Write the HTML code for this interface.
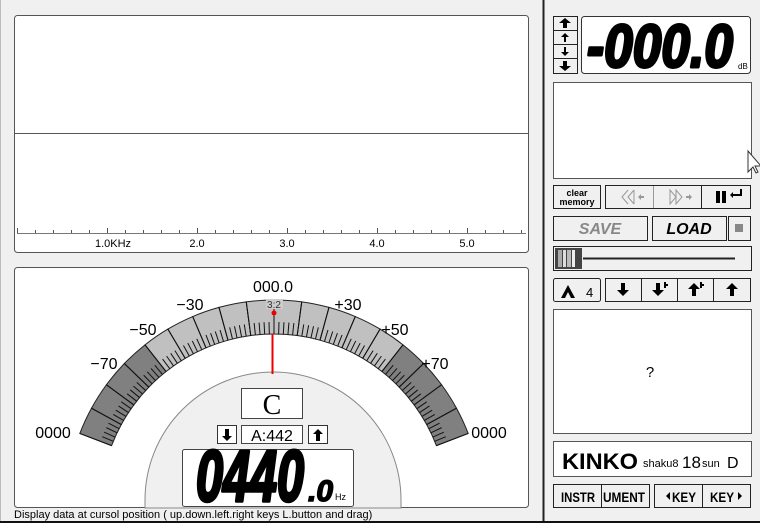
<!DOCTYPE html>
<html><head><meta charset="utf-8"><style>
html,body{margin:0;padding:0;background:#f0f0f0;}
svg{display:block;font-family:"Liberation Sans",sans-serif;}
</style></head><body>
<svg id="s" width="760" height="528" viewBox="0 0 760 528" xmlns="http://www.w3.org/2000/svg">
<rect width="760" height="528" fill="#f0f0f0"/>
<line x1="0.5" y1="0" x2="0.5" y2="522" stroke="#bbb"/>
<rect x="14.5" y="15.5" width="514" height="237" rx="3" fill="#fff" stroke="#555"/>
<line x1="15" y1="133.5" x2="528" y2="133.5" stroke="#555"/>
<line x1="17" y1="233.5" x2="526" y2="233.5" stroke="#777"/>
<g id="ticks" stroke="#555"></g>
<g font-size="11" fill="#000" text-anchor="middle">
<text x="113" y="247">1.0KHz</text><text x="197" y="247">2.0</text><text x="287" y="247">3.0</text><text x="377" y="247">4.0</text><text x="467" y="247">5.0</text>
</g>
<rect x="14.5" y="267.5" width="514" height="240" rx="3" fill="#fff" stroke="#555"/>
<path d="M145,508 L145,500 A128,128 0 0 1 401,500 L401,508 Z" fill="#f0f0f0" stroke="#888"/>
<g id="arc"></g>
<g font-size="16" fill="#000" text-anchor="middle">
<text x="273" y="292">000.0</text>
<text x="190" y="310">−30</text><text x="348" y="310">+30</text>
<text x="143" y="335">−50</text><text x="395" y="335">+50</text>
<text x="104" y="369">−70</text><text x="435" y="369">+70</text>
<text x="53" y="438">0000</text><text x="489" y="438">0000</text>
</g>
<rect x="266" y="299" width="17" height="10" fill="#ccc"/>
<text x="274" y="308" font-size="10" text-anchor="middle" fill="#333">3:2</text>
<circle cx="274" cy="313" r="2.5" fill="#e00"/>
<line x1="272.5" y1="334" x2="272.5" y2="374" stroke="#e00" stroke-width="2"/>
<rect x="241.5" y="388.5" width="61" height="30" fill="#fff" stroke="#444"/>
<text x="272" y="414" font-size="28" font-family="Liberation Serif,serif" text-anchor="middle">C</text>
<rect x="217.5" y="425.5" width="19" height="18" fill="#fff" stroke="#333"/>
<path d="M225,429h4v7h3l-5,5l-5,-5h3z" fill="#000"/>
<rect x="241.5" y="425.5" width="61" height="18" fill="#fff" stroke="#444"/>
<text x="272" y="441" font-size="16" text-anchor="middle">A:442</text>
<rect x="308.5" y="425.5" width="19" height="18" fill="#fff" stroke="#333"/>
<path d="M316,441h4v-7h3l-5,-5l-5,5h3z" fill="#000"/>
<rect x="182.5" y="449.5" width="171" height="57" rx="2" fill="#fff" stroke="#444"/>
<text x="196" y="501" font-size="72" font-weight="bold" font-style="italic" stroke="#000" stroke-width="3.5" stroke-linejoin="round" textLength="108" lengthAdjust="spacingAndGlyphs">0440</text>
<text x="308" y="501" font-size="30" font-weight="bold" font-style="italic" stroke="#000" stroke-width="1.5">.0</text>
<text x="335" y="500" font-size="9">Hz</text>
<text x="14" y="518" font-size="11">Display data at cursol position ( up.down.left.right keys L.button and drag)</text>
<line x1="543.5" y1="0" x2="543.5" y2="522" stroke="#222" stroke-width="2"/>
<rect x="0" y="521" width="760" height="2" fill="#111"/>
<rect x="0" y="523" width="760" height="5" fill="#fff"/>
<g stroke="#222" fill="#f0f0f0">
<rect x="553.5" y="16.5" width="24" height="14"/><rect x="553.5" y="30.5" width="24" height="14"/><rect x="553.5" y="44.5" width="24" height="14"/><rect x="553.5" y="58.5" width="24" height="15"/>
</g>
<g fill="#000">
<path d="M563,28v-5h-4l6,-5l6,5h-4v5z"/><path d="M564,42v-5h-3l4,-4l4,4h-3v5z"/>
<path d="M564,47v5h-3l4,4l4,-4h-3v-5z"/><path d="M563,61v5h-4l6,5l6,-5h-4v-5z"/>
</g>
<rect x="581.5" y="16.5" width="169" height="57" rx="3" fill="#fff" stroke="#333"/>
<text x="587" y="67" font-size="60" font-weight="bold" font-style="italic" stroke="#000" stroke-width="3" stroke-linejoin="round" textLength="146" lengthAdjust="spacingAndGlyphs">-000.0</text>
<text x="738" y="69" font-size="8">dB</text>
<rect x="553.5" y="82.5" width="198" height="96" fill="#fff" stroke="#555"/>
<path d="M748,151v21l5,-5l3,6l2,-1l-3,-6h6z" fill="#fff" stroke="#333"/>
<g stroke="#222" fill="#f0f0f0">
<rect x="553.5" y="185.5" width="47" height="23"/>
<rect x="605.5" y="185.5" width="145" height="23"/>
<rect x="553.5" y="216.5" width="94" height="24"/>
<rect x="652.5" y="216.5" width="74" height="24"/>
<rect x="728.5" y="216.5" width="22" height="24"/>
<rect x="553.5" y="246.5" width="198" height="24"/>
<rect x="553.5" y="278.5" width="47" height="23" rx="2"/>
<rect x="605.5" y="278.5" width="145" height="23"/>
</g>
<g stroke="#999"><line x1="653.5" y1="186" x2="653.5" y2="208"/><line x1="701.5" y1="186" x2="701.5" y2="208" stroke="#222"/></g>
<text x="577" y="196" font-size="9" font-weight="bold" text-anchor="middle">clear</text>
<text x="577" y="205" font-size="9" font-weight="bold" text-anchor="middle">memory</text>
<g fill="none" stroke="#999"><path d="M628,190l-6,7l6,7M634,190l-6,7l6,7M634,190v14"/><path d="M670,190v14l6,-7zM676,190v14l6,-7z"/></g>
<path d="M644,196h-3v-2l-3,3l3,3v-2h3z M686,196h3v-2l3,3l-3,3v-2h-3z" fill="#999"/>
<rect x="716" y="191" width="4" height="12"/><rect x="722" y="191" width="4" height="12"/>
<path d="M740,189v5h-7v-2l-3,3l3,3v-2h9v-7z" fill="#000"/>
<text x="600" y="234" font-size="16" font-weight="bold" font-style="italic" fill="#888" text-anchor="middle">SAVE</text>
<text x="689" y="234" font-size="16" font-weight="bold" font-style="italic" text-anchor="middle">LOAD</text>
<rect x="735" y="224" width="8" height="8" fill="#888"/>
<line x1="583" y1="258.5" x2="735" y2="258.5" stroke="#222" stroke-width="2"/>
<rect x="555" y="248" width="27" height="21" fill="#444"/>
<rect x="558" y="250" width="4" height="17" fill="#aaa"/><rect x="563" y="250" width="3" height="17" fill="#ddd"/><rect x="567" y="250" width="4" height="17" fill="#bbb"/><rect x="572" y="250" width="3" height="17" fill="#eee"/>
<path d="M561,298l7,-13l7,13h-4l-3,-6l-3,6z" fill="#000"/>
<text x="586" y="297" font-size="13">4</text>
<g stroke="#222"><line x1="641.5" y1="279" x2="641.5" y2="301"/><line x1="677.5" y1="279" x2="677.5" y2="301"/><line x1="713.5" y1="279" x2="713.5" y2="301"/></g>
<g fill="#000">
<path d="M621,283h4v7h4l-6,6l-6,-6h4z"/>
<path d="M656,283h4v7h4l-6,6l-6,-6h4z M664,282h2v2h2v2h-2v2h-2z"/>
<path d="M692,296h4v-7h4l-6,-6l-6,6h4z M700,282h2v2h2v2h-2v2h-2z"/>
<path d="M730,296h4v-7h4l-6,-6l-6,6h4z"/>
</g>
<rect x="553.5" y="309.5" width="198" height="124" fill="#fff" stroke="#555"/>
<text x="650" y="377" font-size="15" text-anchor="middle">?</text>
<rect x="553.5" y="441.5" width="198" height="35" fill="#fff" stroke="#555"/>
<text x="562" y="469" font-size="22" font-weight="bold" textLength="76" lengthAdjust="spacingAndGlyphs">KINKO</text>
<text x="643" y="467" font-size="11">shaku8</text>
<text x="682" y="468" font-size="17">18</text><text x="702" y="467" font-size="11">sun</text>
<text x="727" y="468" font-size="16">D</text>
<g stroke="#222" fill="#f0f0f0"><rect x="553.5" y="484.5" width="96" height="23"/><rect x="654.5" y="484.5" width="96" height="23"/></g>
<g stroke="#222"><line x1="601.5" y1="485" x2="601.5" y2="507"/><line x1="702.5" y1="485" x2="702.5" y2="507"/></g>
<g font-size="14" font-weight="bold" text-anchor="middle">
<text x="578" y="502" textLength="34" lengthAdjust="spacingAndGlyphs">INSTR</text>
<text x="624" y="502" textLength="42" lengthAdjust="spacingAndGlyphs">UMENT</text>
<text x="684" y="502" textLength="24" lengthAdjust="spacingAndGlyphs">KEY</text>
<text x="722" y="502" textLength="24" lengthAdjust="spacingAndGlyphs">KEY</text>
</g>
<path d="M666,496l4,-4v8z M738,492l4,4l-4,4z" fill="#000"/>
</svg>
<script>
var NS="http://www.w3.org/2000/svg";
function el(p,t,a){var e=document.createElementNS(NS,t);for(var k in a)e.setAttribute(k,a[k]);p.appendChild(e);return e;}
var tk=document.getElementById('ticks');
for(var x=17;x<526;x+=18){var maj=((x-107)%90===0);el(tk,'line',{x1:x+.5,y1:maj?228:230,x2:x+.5,y2:233});}
var g=document.getElementById('arc');var cx=274,cy=508,R=208,r=174,A=69*Math.PI/180;
function pt(rad,a){return [cx+rad*Math.sin(a),cy-rad*Math.cos(a)];}
function seg(a0,a1,fill){var p=pt(R,a0),q=pt(R,a1),s=pt(r,a1),t=pt(r,a0);
el(g,'path',{d:'M'+p+' A'+R+','+R+' 0 0 1 '+q+' L'+s+' A'+r+','+r+' 0 0 0 '+t+'Z',fill:fill,stroke:'#222','stroke-width':1});}
var st=2*A/18;
for(var i=0;i<18;i++){seg(-A+i*st,-A+(i+1)*st,(i<4||i>=14)?'#808080':'#c0c0c0');}
for(var j=0;j<=90;j++){var a=-A+j*st/5;var p=pt(r,a),q=pt(j%5===0?R:r+12,a);el(g,'line',{x1:p[0],y1:p[1],x2:q[0],y2:q[1],stroke:'#111','stroke-width':1});}
</script>
</body></html>
